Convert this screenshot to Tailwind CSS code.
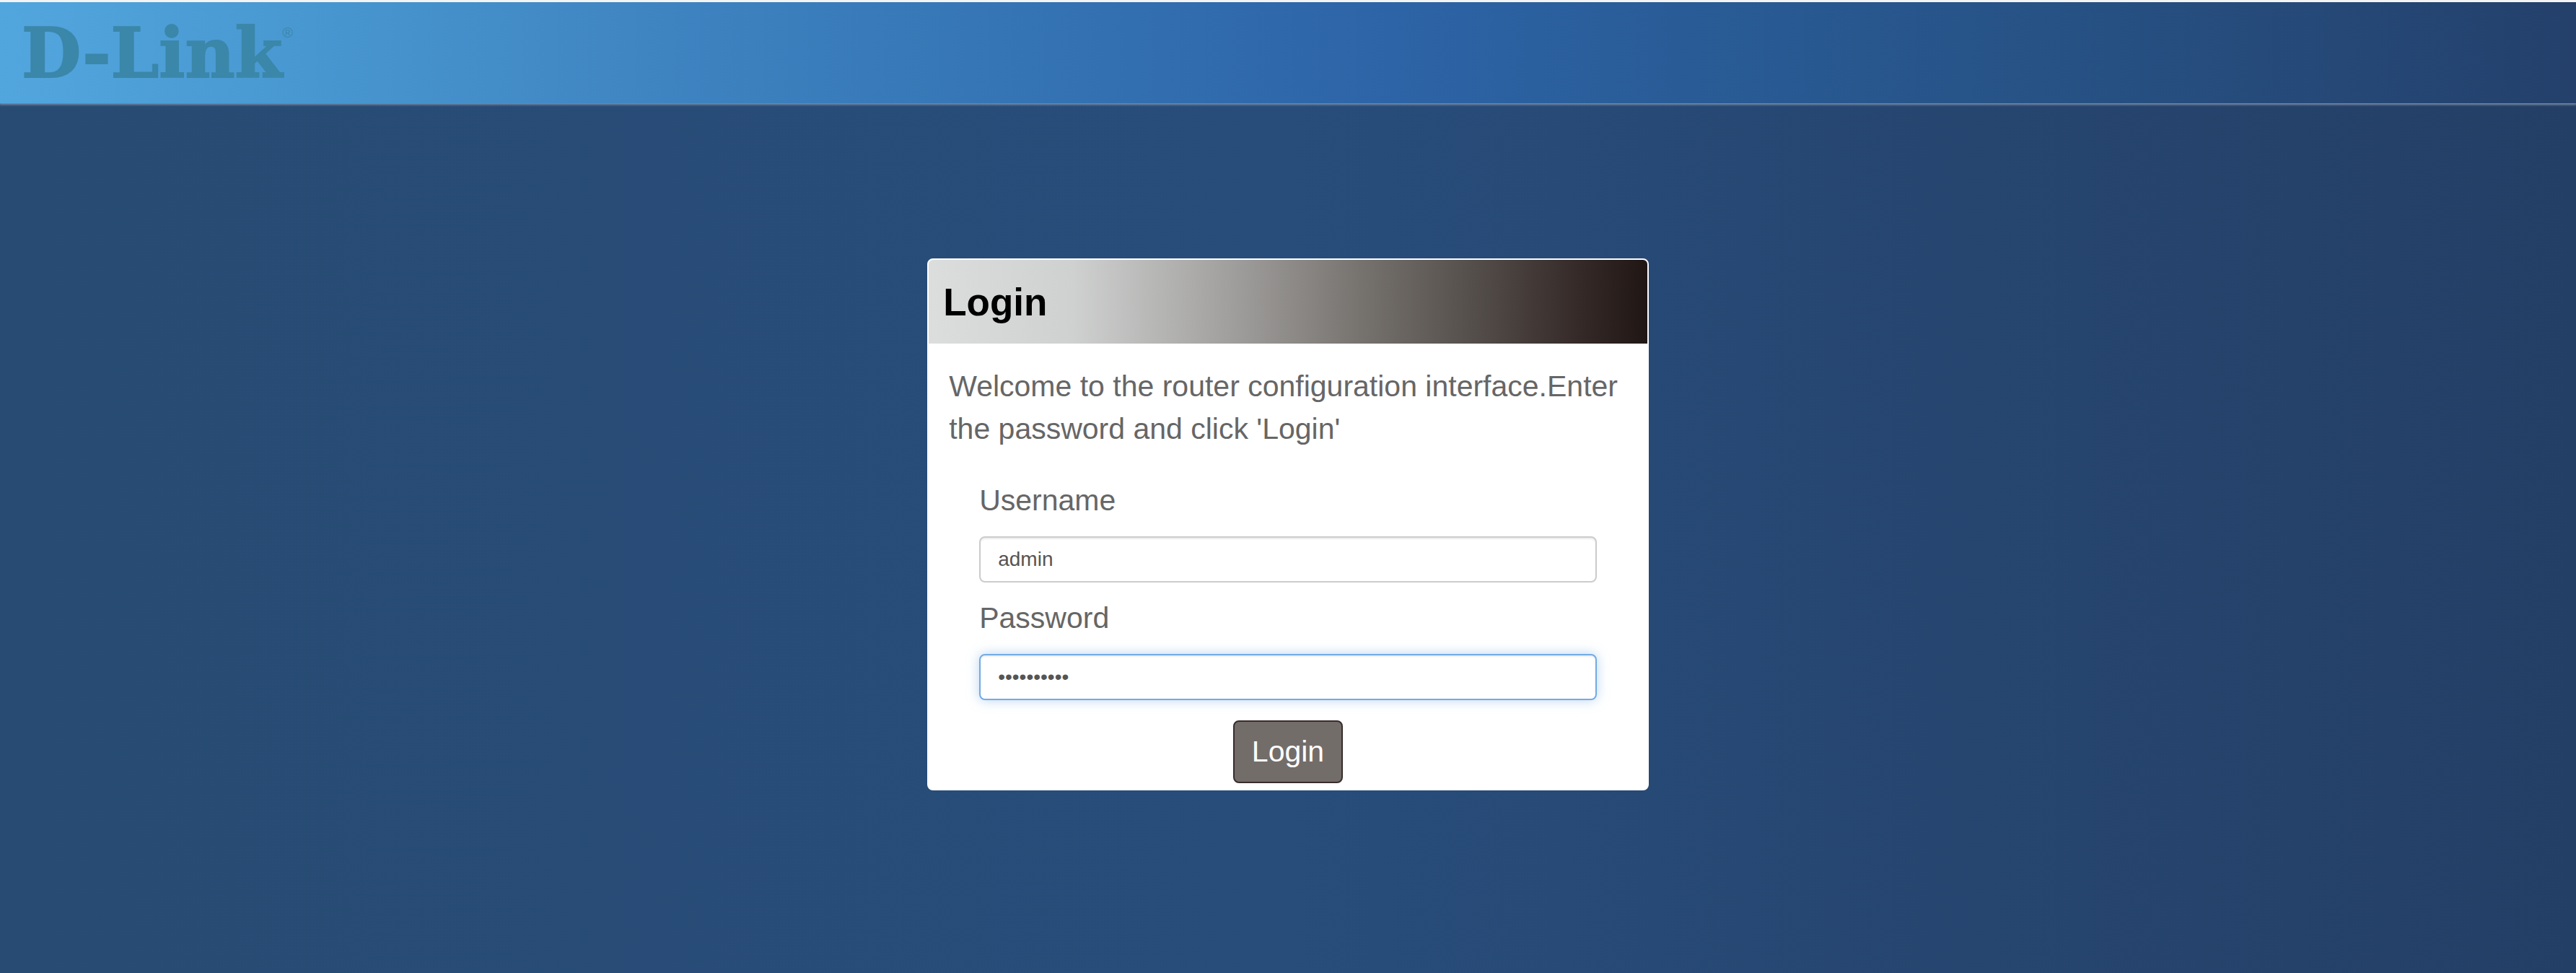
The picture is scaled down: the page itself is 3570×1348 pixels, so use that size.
<!DOCTYPE html>
<html lang="en" class="h-full">

<head>
    <meta charset="UTF-8">
    <meta name="viewport" content="width=device-width, initial-scale=1.0">
    <title>D-Link Login</title>
    <script src="https://cdn.jsdelivr.net/npm/@tailwindcss/browser@4"></script>
</head>

<body
    class="min-h-full bg-linear-to-r from-[#274b72] via-[#284d7b] via-50% to-[#243f66] font-['Liberation_Sans',Arial,sans-serif]">
    <header
        class="border-t-3 border-[#f4f4f4] h-[143px] px-[30px] flex items-start bg-linear-[to_right,#52a6de_0%,#4897d1_12%,#3f85c2_25%,#3371b2_42%,#2d64a7_54%,#295c97_65%,#265082_82%,#24406b_100%] shadow-[0_1px_3px_1px_#7d90aa]">
        <a href="#" class="flex items-start pt-4 text-[#3b87aa]" aria-label="D-Link">
            <span
                class="font-['DejaVu_Serif',serif] font-bold text-[95px] leading-[110px] [-webkit-text-stroke:2px_#3b87aa]">D-Link</span>
            <sup class="text-[20px] leading-none top-4">®</sup>
        </a>
    </header>

    <main class="flex justify-center pt-[215px] pb-20">
        <section class="w-[28%] bg-white border-2 border-white rounded-lg overflow-hidden">
            <div
                class="h-[116px] px-5 flex items-center bg-linear-[to_right,#dcdedd_0%,#cfd1d0_20%,#9a9896_45%,#726e6a_62%,#544e4a_76%,#362b29_90%,#201613_100%]">
                <h1 class="text-[53px] leading-none font-bold text-black">Login</h1>
            </div>
            <form class="pt-[30px] pb-2 text-[41px] leading-[59px] text-[#666666]">
                <p class="px-7">Welcome to the router configuration interface.Enter the password and click 'Login'</p>
                <div class="px-[70px] pt-10 flex flex-col gap-5">
                    <label for="username">Username</label>
                    <input type="text" id="username" name="username" value="admin"
                        class="w-full h-16 px-6 bg-white text-[28px] text-[#555555] border-2 border-[#cccccc] rounded-lg inset-shadow-[0_2px_2px_#00000013] focus:outline-none">

                    <label for="password">Password</label>
                    <input type="password" id="password" name="password" value="admin12345"
                        class="w-full h-16 px-6 bg-white text-[28px] text-[#555555] border-2 border-[#73abe3] rounded-lg shadow-[0_0_16px_#73abe380] inset-shadow-[0_2px_2px_#00000013] focus:outline-none">
                </div>
                <div class="flex justify-center pt-7">
                    <button type="button"
                        class="h-[87px] px-6 bg-[#736d6a] hover:bg-[#5c5653] text-white border-2 border-[#382c2c] rounded-lg">Login</button>
                </div>
            </form>
        </section>
    </main>
</body>

</html>
